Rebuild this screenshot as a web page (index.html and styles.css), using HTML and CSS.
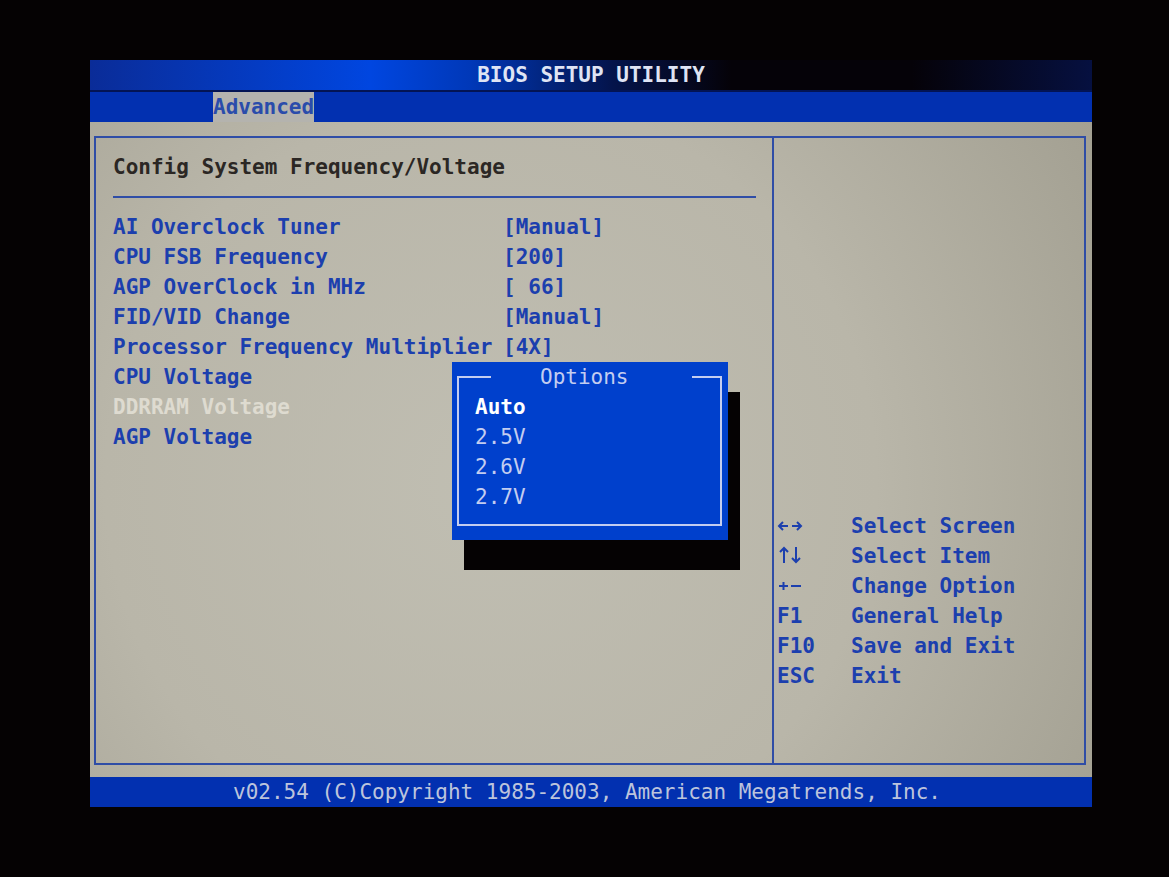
FILE: index.html
```html
<!DOCTYPE html>
<html lang="en">
<head>
    <meta charset="UTF-8">
    <meta name="viewport" content="width=device-width, initial-scale=1.0">
    <title>BIOS Setup Utility</title>
    <link rel="stylesheet" href="styles.css">
</head>
<body>
    <div class="screen">
        <header class="title-bar">BIOS SETUP UTILITY</header>

        <nav class="menu-bar">
            <a href="#advanced" class="tab">Advanced</a>
        </nav>

        <main class="content">
            <div class="frame">
                <section class="settings" id="advanced">
                    <h1>Config System Frequency/Voltage</h1>
                    <table>
                        <tr><th scope="row">AI Overclock Tuner</th><td>[Manual]</td></tr>
                        <tr><th scope="row">CPU FSB Frequency</th><td>[200]</td></tr>
                        <tr><th scope="row">AGP OverClock in MHz</th><td>[ 66]</td></tr>
                        <tr><th scope="row">FID/VID Change</th><td>[Manual]</td></tr>
                        <tr><th scope="row">Processor Frequency Multiplier</th><td>[4X]</td></tr>
                        <tr><th scope="row">CPU Voltage</th><td></td></tr>
                        <tr class="selected"><th scope="row">DDRRAM Voltage</th><td></td></tr>
                        <tr><th scope="row">AGP Voltage</th><td></td></tr>
                    </table>

                    <div class="popup">
                        <fieldset>
                            <legend>Options</legend>
                            <button type="button" class="active">Auto</button>
                            <button type="button">2.5V</button>
                            <button type="button">2.6V</button>
                            <button type="button">2.7V</button>
                        </fieldset>
                    </div>
                </section>

                <aside class="help">
                    <dl>
                        <dt>
                            <svg width="26" height="16" viewBox="0 0 26 16" aria-label="Left and right arrows">
                                <path d="M2 8H11M15 8H24M6 4L2 8L6 12M20 4L24 8L20 12"/>
                            </svg>
                        </dt>
                        <dd>Select Screen</dd>
                        <dt>
                            <svg width="26" height="20" viewBox="0 0 26 20" aria-label="Up and down arrows">
                                <path d="M7 17V2M3 6L7 2L11 6M19 1V16M15 12L19 16L23 12"/>
                            </svg>
                        </dt>
                        <dd>Select Item</dd>
                        <dt>
                            <svg width="26" height="16" viewBox="0 0 26 16" aria-label="Plus and minus">
                                <path d="M2 8H11M6.5 4V12M14 8H24"/>
                            </svg>
                        </dt>
                        <dd>Change Option</dd>
                        <dt>F1</dt>
                        <dd>General Help</dd>
                        <dt>F10</dt>
                        <dd>Save and Exit</dd>
                        <dt>ESC</dt>
                        <dd>Exit</dd>
                    </dl>
                </aside>
            </div>
        </main>

        <footer class="status-bar">v02.54 (C)Copyright 1985-2003, American Megatrends, Inc.</footer>
    </div>
</body>
</html>
```

FILE: styles.css
```css
:root {
    --black: #050203;
    --bar: #0230b0;
    --popup: #0040cc;
    --blue: #1c3fae;
    --line: #2f4da6;
    --grey: #b9b6a9;
    --light: #c3cdf0;
}

* {
    box-sizing: border-box;
}

body {
    margin: 0;
    min-height: 100vh;
    padding: 60px 77px 70px 90px;
    display: flex;
    background: var(--black);
    color: var(--blue);
    font-family: 'DejaVu Sans Mono', 'Liberation Mono', monospace;
    font-size: 21px;
    font-weight: bold;
    line-height: 30px;
}

.screen {
    flex: 1;
    display: flex;
    flex-direction: column;
}

.title-bar {
    background: linear-gradient(90deg, #0a2c98 0%, #0046e0 28%, #0038b8 38%, #04144c 52%, #050208 64%, #050208 82%, #061040 100%);
    border-bottom: 2px solid #031454;
    color: #dfe4f4;
    text-align: center;
}

.menu-bar {
    background: var(--bar);
    padding-left: 123px;
    height: 30px;
}

.tab {
    display: inline-block;
    background: #b4b3ae;
    color: #2a4cab;
    text-decoration: none;
}

.content {
    flex: 1;
    display: flex;
    padding: 14px 6px 12px 4px;
    background: radial-gradient(circle at 40% 55%, #c0beb2 0%, var(--grey) 55%, #a3a092 100%);
}

.frame {
    flex: 1;
    display: grid;
    grid-template-columns: 13fr 6fr;
    border: 2px solid var(--line);
}

.settings {
    position: relative;
    padding: 14px 16px 14px 17px;
}

h1 {
    margin: 0 0 14px;
    padding-bottom: 14px;
    border-bottom: 2px solid var(--line);
    color: #2b2724;
    font-size: 21px;
}

table {
    border-collapse: collapse;
}

th,
td {
    padding: 0;
    height: 30px;
    text-align: left;
    white-space: pre;
}

th {
    width: 390px;
}

.selected {
    color: #dedbd0;
}

.popup {
    position: absolute;
    top: 224px;
    left: 356px;
    width: 276px;
    padding: 0 6px 14px 5px;
    background: var(--popup);
    box-shadow: 12px 30px 0 var(--black);
    color: var(--light);
    font-weight: normal;
}

fieldset {
    margin: 0;
    padding: 0 0 12px 16px;
    border: 2px solid var(--light);
}

legend {
    margin-left: 16px;
    padding: 0 63px 0 49px;
}

fieldset button {
    display: block;
    padding: 0;
    border: none;
    background: none;
    color: inherit;
    font: inherit;
    cursor: pointer;
}

fieldset .active {
    color: #ffffff;
    font-weight: bold;
}

.help {
    display: flex;
    align-items: flex-end;
    border-left: 2px solid var(--line);
    padding: 0 3px 72px;
}

dl {
    display: grid;
    grid-template-columns: 74px 1fr;
    margin: 0;
}

dd {
    margin: 0;
}

dt svg {
    display: block;
    height: 30px;
    fill: none;
    stroke: currentColor;
    stroke-width: 2;
}

.status-bar {
    padding-right: 8px;
    background: var(--bar);
    color: #bcc4dc;
    font-weight: normal;
    text-align: center;
}
```
